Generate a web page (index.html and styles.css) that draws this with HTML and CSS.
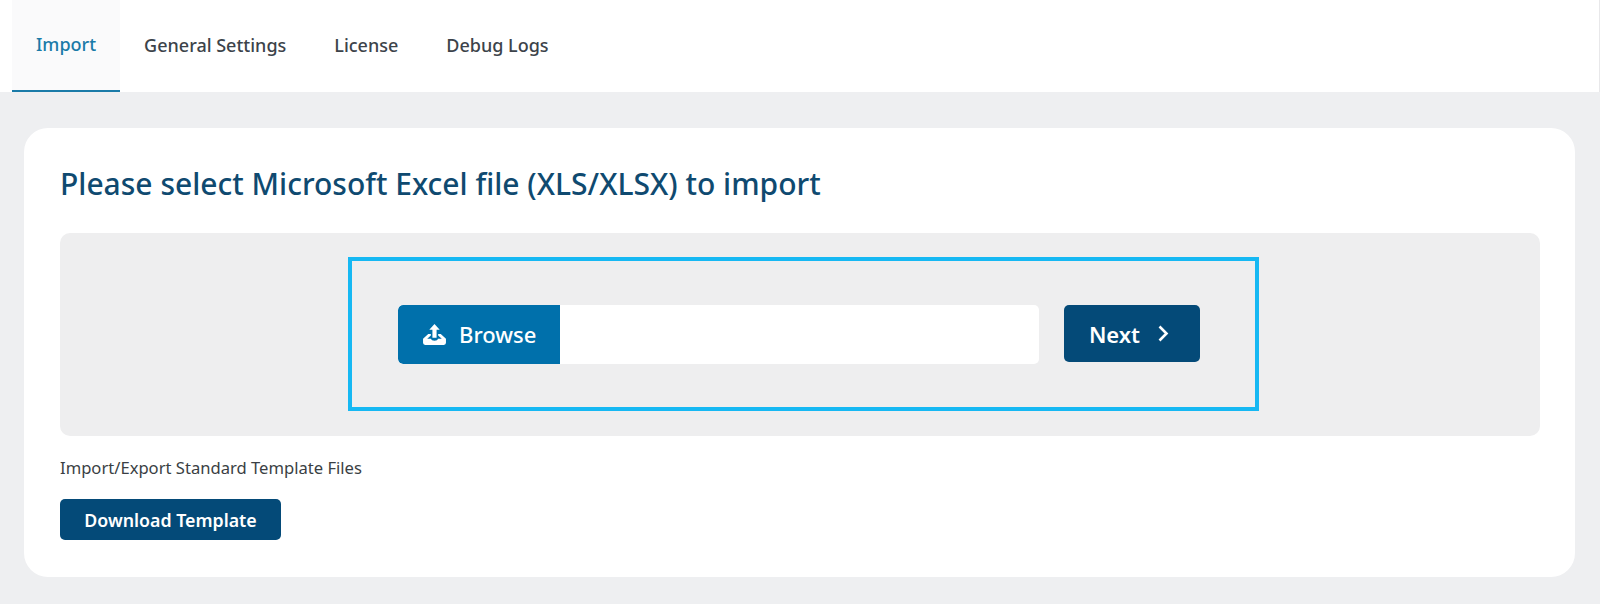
FILE: index.html
```html
<!DOCTYPE html>
<html lang="en">
<head>
  <meta charset="UTF-8">
  <meta name="viewport" content="width=device-width, initial-scale=1.0">
  <title>Import</title>
  <link rel="stylesheet" href="styles.css">
</head>
<body>
  <!-- Tabs -->
  <nav class="tabs">
    <a class="tab active" href="#">Import</a>
    <a class="tab" href="#">General Settings</a>
    <a class="tab" href="#">License</a>
    <a class="tab" href="#">Debug Logs</a>
  </nav>

  <div class="card">
    <h2>Please select Microsoft Excel file (XLS/XLSX) to import</h2>

    <div class="panel">
      <div class="upload-box">
        <div class="file-field">
          <button class="browse">
            <svg class="icon-upload" width="25" height="23" viewBox="0 0 24 22">
              <path d="M12 1 L17 6.5 H14 V14 H10 V6.5 H7 Z" fill="#fff"/>
              <path d="M6 10.5 L1 15 V19 Q1 21 3 21 H21 Q23 21 23 19 V15 L18 10.5 H15.5 V12 L19 15 H15.5 Q15 17 12 17 Q9 17 8.5 15 H5 L8.5 12 V10.5 Z" fill="#fff"/>
            </svg>
            Browse
          </button>
          <div class="file-name"></div>
        </div>
        <button class="btn next">
          Next
          <svg width="13" height="19" viewBox="0 0 13 19">
            <path d="M2.5 2.5 L9.5 9.5 L2.5 16.5" fill="none" stroke="#fff" stroke-width="2.6"/>
          </svg>
        </button>
      </div>
    </div>

    <p class="note">Import/Export Standard Template Files</p>
    <button class="btn download">Download Template</button>
  </div>
</body>
</html>
```

FILE: styles.css
```css
* {
  box-sizing: border-box;
}
body {
  font-family: "Noto Sans", "Open Sans", Arial, sans-serif;
  margin: 0;
  height: 604px;
  overflow: hidden;
  background-color: #eeeff1;
}
.tabs {
  display: flex;
  height: 92px;
  padding-left: 12px;
  background: #fff;
  border-right: 1px solid #e8e8ea;
}
.tab {
  display: flex;
  align-items: center;
  padding: 0 24px 2px;
  font-size: 18px;
  font-weight: 500;
  color: #3c434a;
  text-decoration: none;
}
.tab.active {
  color: #1a7ba8;
  background: #fafafb;
  border-bottom: 2px solid #1a7ba8;
}
.card {
  margin: 36px 25px 0 24px;
  height: 449px;
  padding: 36px 35px 36px 36px;
  background: #fff;
  border-radius: 24px;
}
h2 {
  margin: 0 0 29px;
  font-size: 30px;
  line-height: 40px;
  font-weight: 500;
  color: #0f4a70;
}
.panel {
  display: flex;
  justify-content: center;
  padding: 24px 0 25px;
  background: #eeeeef;
  border-radius: 10px;
}
.upload-box {
  display: flex;
  align-items: center;
  width: 911px;
  height: 154px;
  padding: 0 46px;
  margin-left: 7px;
  border: 4px solid #16b8f3;
}
.file-field {
  display: flex;
  width: 641px;
  height: 59px;
  margin-right: 25px;
  background: #fff;
  border-radius: 5px;
  overflow: hidden;
}
.browse {
  display: flex;
  align-items: center;
  gap: 12px;
  width: 162px;
  padding: 0 0 0 24px;
  font-family: inherit;
  font-size: 22px;
  font-weight: 500;
  color: #fff;
  background-color: #0070ab;
  border: none;
  border-radius: 5px 0 0 5px;
}
.file-name {
  flex: 1;
}
.btn {
  font-family: inherit;
  font-weight: 600;
  color: #fff;
  background-color: #044a78;
  border: none;
  border-radius: 5px;
}
.next {
  display: flex;
  align-items: center;
  justify-content: center;
  gap: 17px;
  width: 136px;
  height: 57px;
  padding: 0 5px 0 0;
  font-size: 22px;
  margin-top: -1px;
}
.note {
  margin: 21px 0 20px;
  font-size: 16.6px;
  line-height: 22px;
  color: #3a3f44;
}
.download {
  display: block;
  width: 221px;
  height: 41px;
  font-size: 17.8px;
}
```
